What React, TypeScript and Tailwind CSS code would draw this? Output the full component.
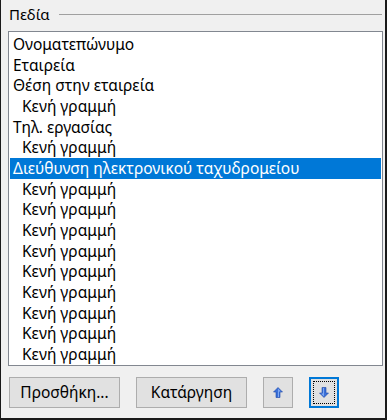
import React from 'react'

const items: { label: string; indent?: boolean; selected?: boolean }[] = [
  { label: 'Ονοματεπώνυμο' },
  { label: 'Εταιρεία' },
  { label: 'Θέση στην εταιρεία' },
  { label: 'Κενή γραμμή', indent: true },
  { label: 'Τηλ. εργασίας' },
  { label: 'Κενή γραμμή', indent: true },
  { label: 'Διεύθυνση ηλεκτρονικού ταχυδρομείου', selected: true },
  ...Array.from({ length: 10 }, () => ({ label: 'Κενή γραμμή', indent: true })),
]

function Arrow({ down }: { down?: boolean }) {
  return (
    <svg width="10" height="11" viewBox="0 0 10 11" className={down ? 'rotate-180' : ''}>
      <path d="M5 0.5 L9.5 5 L7 5 L7 10.5 L3 10.5 L3 5 L0.5 5 Z" fill="#3a6fd8" />
      <path d="M5 1.5 L8 4.5 L6 4.5 L6 10 L5 10 Z" fill="#7fa8f0" />
      <path d="M5 0.5 L9.5 5 L7 5 L7 10.5 L3 10.5 L3 5 L0.5 5 Z" fill="none" stroke="#1d47a8" strokeWidth="0.6" />
    </svg>
  )
}

function Button({ children, className = '' }: { children: React.ReactNode; className?: string }) {
  return (
    <button
      className={`flex h-[31px] items-center justify-center border border-[#adadad] bg-[#e1e1e1] text-[15.5px] text-black ${className}`}
    >
      {children}
    </button>
  )
}

export default function App() {
  return (
    <div
      className="flex h-[420px] w-[387px] flex-col border-b-2 border-l border-r-2 border-[#1a1a1a] bg-[#f0f0f0]"
      style={{ fontFamily: '"Noto Sans", "Open Sans", sans-serif' }}
    >
      <div className="flex items-center pl-[8px] pr-[3px] pt-[4px]">
        <span className="text-[15px] leading-[20px] text-black">Πεδία</span>
        <div className="ml-[9px] mt-[1px] h-px flex-1 bg-[#a0a0a0]" />
      </div>
      <div className="ml-[7px] mr-[2px] mt-[7px] h-[335px] overflow-hidden border border-[#828790] bg-white pt-[2px]">
        {items.map((it, i) => (
          <div
            key={i}
            className={`h-[20.67px] truncate text-[15.5px] leading-[20.67px] ${
              it.selected ? 'mx-px bg-[#0078d7] pl-[3px] text-white' : 'text-black'
            } ${it.indent ? 'pl-[13px]' : it.selected ? '' : 'pl-[4px]'}`}
          >
            {it.label}
          </div>
        ))}
      </div>
      <div className="mt-[11px] flex items-center pl-[8px]">
        <Button className="w-[111px]">Προσθήκη...</Button>
        <Button className="ml-[16px] w-[111px]">Κατάργηση</Button>
        <Button className="ml-[16px] w-[30px]">
          <Arrow />
        </Button>
        <button className="ml-[16px] flex h-[31px] w-[30px] items-center justify-center border-2 border-[#0078d7] bg-[#e1e1e1] p-[2px]">
          <span className="flex h-full w-full items-center justify-center border border-dotted border-black">
            <Arrow down />
          </span>
        </button>
      </div>
    </div>
  )
}
